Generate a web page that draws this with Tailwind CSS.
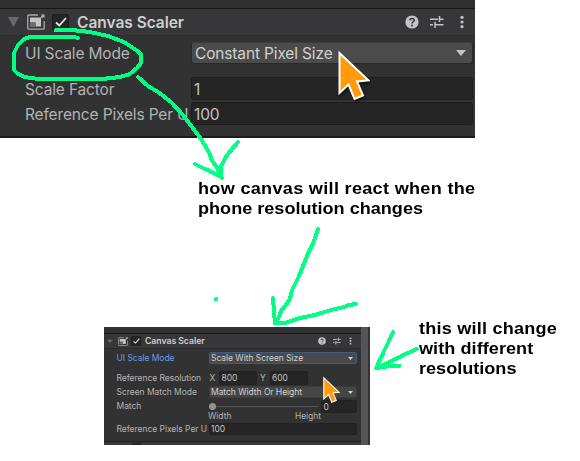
<!DOCTYPE html>
<html lang="en">
<head>
<meta charset="utf-8">
<title>Canvas Scaler notes</title>
<script src="https://cdn.jsdelivr.net/npm/@tailwindcss/browser@4"></script>
</head>
<body class="bg-white">
<svg width="0" height="0" class="absolute">
  <defs>
    <symbol id="component" viewBox="0 0 18 16">
      <path d="M11 1H2Q.8 1 .8 2.200V14Q.8 15.200 2 15.200H16Q17.200 15.200 17.200 14V7" fill="none" stroke="#a9a9a9" stroke-width="1.300"/>
      <path d="M3 3.500H14V12.500H8.500V8.500H3Z" fill="#c4c4c4"/>
      <path d="M3 8.500H8.500V13H3Z" fill="#6c6c6c"/>
      <path d="M14 .5H17.500V4L16.300 3L15 4.300L13.700 3L15 1.700Z" fill="#b5b5b5"/>
    </symbol>
    <symbol id="help" viewBox="0 0 14 14">
      <circle cx="7" cy="7" r="6.600" fill="#c4c4c4"/>
      <path d="M4.800 5.400Q4.900 3.400 7 3.400Q9.200 3.400 9.200 5.200Q9.200 6.300 8 6.900Q7 7.500 7 8.500" fill="none" stroke="#353537" stroke-width="1.500"/>
      <circle cx="7" cy="10.500" r="1" fill="#353537"/>
    </symbol>
    <symbol id="preset" viewBox="0 0 14 14">
      <path d="M0 4.300H8M9.500 4.300H13.500M9.500 1V7M0 9.700H3M5 9.700H13.500M5 6.800V13" fill="none" stroke="#c4c4c4" stroke-width="1.500"/>
    </symbol>
    <symbol id="dots" viewBox="0 0 4 14">
      <circle cx="2" cy="2.300" r="1.600" fill="#c4c4c4"/><circle cx="2" cy="7" r="1.600" fill="#c4c4c4"/><circle cx="2" cy="11.700" r="1.600" fill="#c4c4c4"/>
    </symbol>
    <symbol id="pointer" viewBox="0 0 32 50">
      <path d="M1.500 2L1.500 42L10.500 33.500L16.500 48L25 44.500L19 30.500L30.500 29.500Z" fill="#ff9a0a" stroke="#fff" stroke-width="2"/>
    </symbol>
    <symbol id="down" viewBox="0 0 10 6"><path d="M0 0H10L5 6Z" fill="currentColor"/></symbol>
    <symbol id="check" viewBox="0 0 12 10"><path d="M1 5.500L4.300 8.500L11 1" fill="none" stroke="#e4e4e4" stroke-width="1.800"/></symbol>
  </defs>
</svg>
<main class="relative h-[461px] w-[580px] overflow-hidden bg-white font-['Inter',sans-serif]">

  <section class="absolute left-0 top-0 flex h-[138px] w-[475px] flex-col border-b-2 border-[#1c1c1c] bg-[#323232] text-[15.5px] tracking-[-0.15px] text-[#b2b2b2]">
    <div class="h-[9px] shrink-0 border-b border-[#171717] bg-[#303030]"></div>
    <header class="flex h-[27px] shrink-0 items-center border-b border-[#2d2d2d] bg-[#373739] pl-2">
      <svg class="h-[10px] w-[11px] text-[#686868]" preserveAspectRatio="none" viewBox="0 0 10 6"><path d="M0 0H10L5 6Z" fill="currentColor"/></svg>
      <svg class="ml-2 h-4 w-[18px]"><use href="#component"/></svg>
      <span class="ml-[7px] flex size-[17px] items-center justify-center rounded-[2px] border border-[#1c1c1c] bg-[#252525]"><svg class="h-[10px] w-3"><use href="#check"/></svg></span>
      <h2 class="ml-2 whitespace-nowrap pt-[2px] text-[15.5px] font-semibold tracking-[-0.03px] text-[#cfcfcf]">Canvas Scaler</h2>
      <svg class="ml-auto size-[14px]"><use href="#help"/></svg>
      <svg class="ml-[11px] size-[14px]"><use href="#preset"/></svg>
      <svg class="ml-[16px] mr-[11px] h-[14px] w-1"><use href="#dots"/></svg>
    </header>
    <div class="mt-[6px] flex h-[22px] shrink-0 pl-[25px] pr-[2px]">
      <span class="w-[166px] whitespace-nowrap leading-[24px]">UI Scale Mode</span>
      <div class="flex flex-1 items-center rounded-[3px] border border-[#292929] border-t-[#3c3c3c] bg-[#4b4b4b] pl-[3px] pr-[6px] text-[#d0d0d0]"><span class="whitespace-nowrap pt-px">Constant Pixel Size</span><svg class="ml-auto h-[6px] w-[10px] text-[#c4c4c4]"><use href="#down"/></svg></div>
    </div>
    <div class="mt-[13px] flex h-[23px] shrink-0 pl-[25px] pr-[2px]">
      <span class="w-[166px] whitespace-nowrap leading-[25px]">Scale Factor</span>
      <div class="flex-1 rounded-[3px] border border-[#1d1d1d] bg-[#252525] pl-[2px] leading-[23px] text-[#c4c4c4]">1</div>
    </div>
    <div class="mt-[2px] flex h-[23px] shrink-0 pl-[25px] pr-[2px]">
      <span class="w-[166px] whitespace-nowrap leading-[25px]">Reference Pixels Per U</span>
      <div class="flex-1 rounded-[3px] border border-[#1d1d1d] bg-[#252525] pl-[2px] leading-[23px] text-[#c4c4c4]">100</div>
    </div>
  </section>
  <svg class="absolute left-[338px] top-[51px] h-[50px] w-[32px] drop-shadow-[1px_2px_1px_rgba(0,0,0,.5)]"><use href="#pointer"/></svg>

  <p class="absolute left-[198px] top-[179px] flex origin-left scale-x-[1.13] flex-col whitespace-nowrap font-['Liberation_Sans',sans-serif] text-[16px] font-bold leading-[20px] text-black"><span class="tracking-[0.27px]">how canvas will react when the</span><span>phone resolution changes</span></p>
  <p class="absolute left-[419px] top-[319px] flex origin-left scale-x-[1.13] flex-col whitespace-nowrap font-['Liberation_Sans',sans-serif] text-[16px] font-bold leading-[20px] text-black"><span class="tracking-[0.19px]">this will change</span><span class="tracking-[0.05px]">with different</span><span>resolutions</span></p>

  <section class="absolute left-[104px] top-[327px] flex h-[118px] w-[266px] bg-[#323232] text-[8.5px] tracking-[-0.04px] text-[#b4b4b4]">
    <div class="flex w-[257px] flex-col">
      <div class="h-[7px] shrink-0 border-b border-[#1b1b1b]"></div>
      <header class="flex h-[15px] shrink-0 items-center border-b border-[#2c2c2c] bg-[#373739] pl-[3px]">
        <svg class="h-[5px] w-[6px] text-[#686868]"><use href="#down"/></svg>
        <svg class="ml-[5px] h-[9px] w-[10px]"><use href="#component"/></svg>
        <span class="ml-[3px] flex size-[10px] items-center justify-center rounded-[1px] border border-[#222] bg-[#252525]"><svg class="h-[6px] w-[7px]"><use href="#check"/></svg></span>
        <h2 class="ml-[4px] whitespace-nowrap pt-[2px] text-[8.7px] font-semibold text-[#cfcfcf]">Canvas Scaler</h2>
        <svg class="ml-auto size-[8px]"><use href="#help"/></svg>
        <svg class="ml-[7px] size-[8px]"><use href="#preset"/></svg>
        <svg class="ml-[8px] mr-[9px] h-[8px] w-[3px]"><use href="#dots"/></svg>
      </header>
      <div class="mt-[3px] flex h-[12px] shrink-0 pl-[12.5px] pr-[4px] leading-[13px]">
        <span class="w-[92px] whitespace-nowrap text-[#6c9bea]">UI Scale Mode</span>
        <div class="flex flex-1 items-center rounded-[2px] border border-[#3b5c86] bg-[#494949] pl-[1.5px] pr-[3px] text-[#d0d0d0]"><span class="whitespace-nowrap">Scale With Screen Size</span><svg class="ml-auto h-[3px] w-[5px]"><use href="#down"/></svg></div>
      </div>
      <div class="mt-[7px] flex h-[14px] shrink-0 pl-[12.5px] leading-[14px]">
        <span class="w-[93px] whitespace-nowrap">Reference Resolution</span>
        <span class="w-[9.5px]">X</span><div class="w-[38px] rounded-[2px] border border-[#222] bg-[#252525] pl-[1.5px] leading-[12px] text-[#c4c4c4]">800</div>
        <span class="ml-[3px] w-[9.500px]">Y</span><div class="w-[38px] rounded-[2px] border border-[#222] bg-[#252525] pl-[1.5px] leading-[12px] text-[#c4c4c4]">600</div>
      </div>
      <div class="mt-[1px] flex h-[12px] shrink-0 pl-[12.5px] pr-[4px] leading-[12px]">
        <span class="w-[92px] whitespace-nowrap">Screen Match Mode</span>
        <div class="flex flex-1 items-center rounded-[2px] border border-[#3c3c3c] bg-[#464646] pl-[1.5px] pr-[3px] text-[#d0d0d0]"><span class="whitespace-nowrap">Match Width Or Height</span><svg class="ml-auto h-[3px] w-[5px]"><use href="#down"/></svg></div>
      </div>
      <div class="mt-[2px] flex h-[12px] shrink-0 items-center pl-[12.5px] pr-[4px] leading-[12px]">
        <span class="w-[92px] whitespace-nowrap">Match</span>
        <i class="size-[7px] rounded-full bg-[#929292]"></i><i class="h-px w-[102px] bg-[#575757]"></i>
        <div class="ml-[3px] h-[13px] flex-1 rounded-[2px] border border-[#222] bg-[#252525] pl-[2px] text-[#c4c4c4]">0</div>
      </div>
      <div class="flex h-[9px] shrink-0 justify-between pl-[104px] pr-[40px] leading-[8px]"><span>Width</span><span>Height</span></div>
      <div class="mt-[2px] flex h-[12px] shrink-0 pl-[12.5px] pr-[4px] leading-[13px]">
        <span class="w-[92px] whitespace-nowrap">Reference Pixels Per U</span>
        <div class="flex-1 rounded-[2px] border border-[#222] bg-[#252525] pl-[1.5px] leading-[11px] text-[#c4c4c4]">100</div>
      </div>
      <div class="mt-[6px] flex h-[4px] border-t border-[#1d1d1d] bg-[#373739] pl-[28px] pt-[1px]"><i class="h-[2px] w-[9px] bg-[#252525]"></i></div>
    </div>
    <div class="w-[7px] bg-[#555356]"></div><div class="w-[2px] bg-[#353336]"></div>
  </section>
  <svg class="absolute left-[323px] top-[376px] h-[28px] w-[17px]"><use href="#pointer"/></svg>

  <svg class="absolute left-0 top-0" width="580" height="461" viewBox="0 0 580 461" fill="none" stroke="#00ff84" stroke-width="4" stroke-linecap="round" stroke-linejoin="round" shape-rendering="crispEdges">
    <path d="M78 38L74 37H37L30 37L24 39L18 45L14 53V70L18 74L25 77L38 79H102L120 77L130 74L137 68L141 63V54L136 50L124 42L108 36L90 32L72 30L56 30"/>
    <path d="M138 77L148 86L158 92L171 102L183 115L192 127L201 139L210 154L211 159L218 169L222 178M195 164L205 169L214 173L221 177V167L225 158L232 149L238 142"/>
    <path d="M318 229L314 241L307 256L299 276L292 290L290 299L285 306L281 311L279 317L275 323L274 312L273 298M275 323H285L300 318L315 315L331 310L344 307L349 305L356 304"/>
    <path d="M393 332L389 341L383 353L378 364L376 368L388 363L401 356L417 349M376 368L390 366H399"/>
    <path d="M216 299H216.010"/>
  </svg>
</main>
</body>
</html>
